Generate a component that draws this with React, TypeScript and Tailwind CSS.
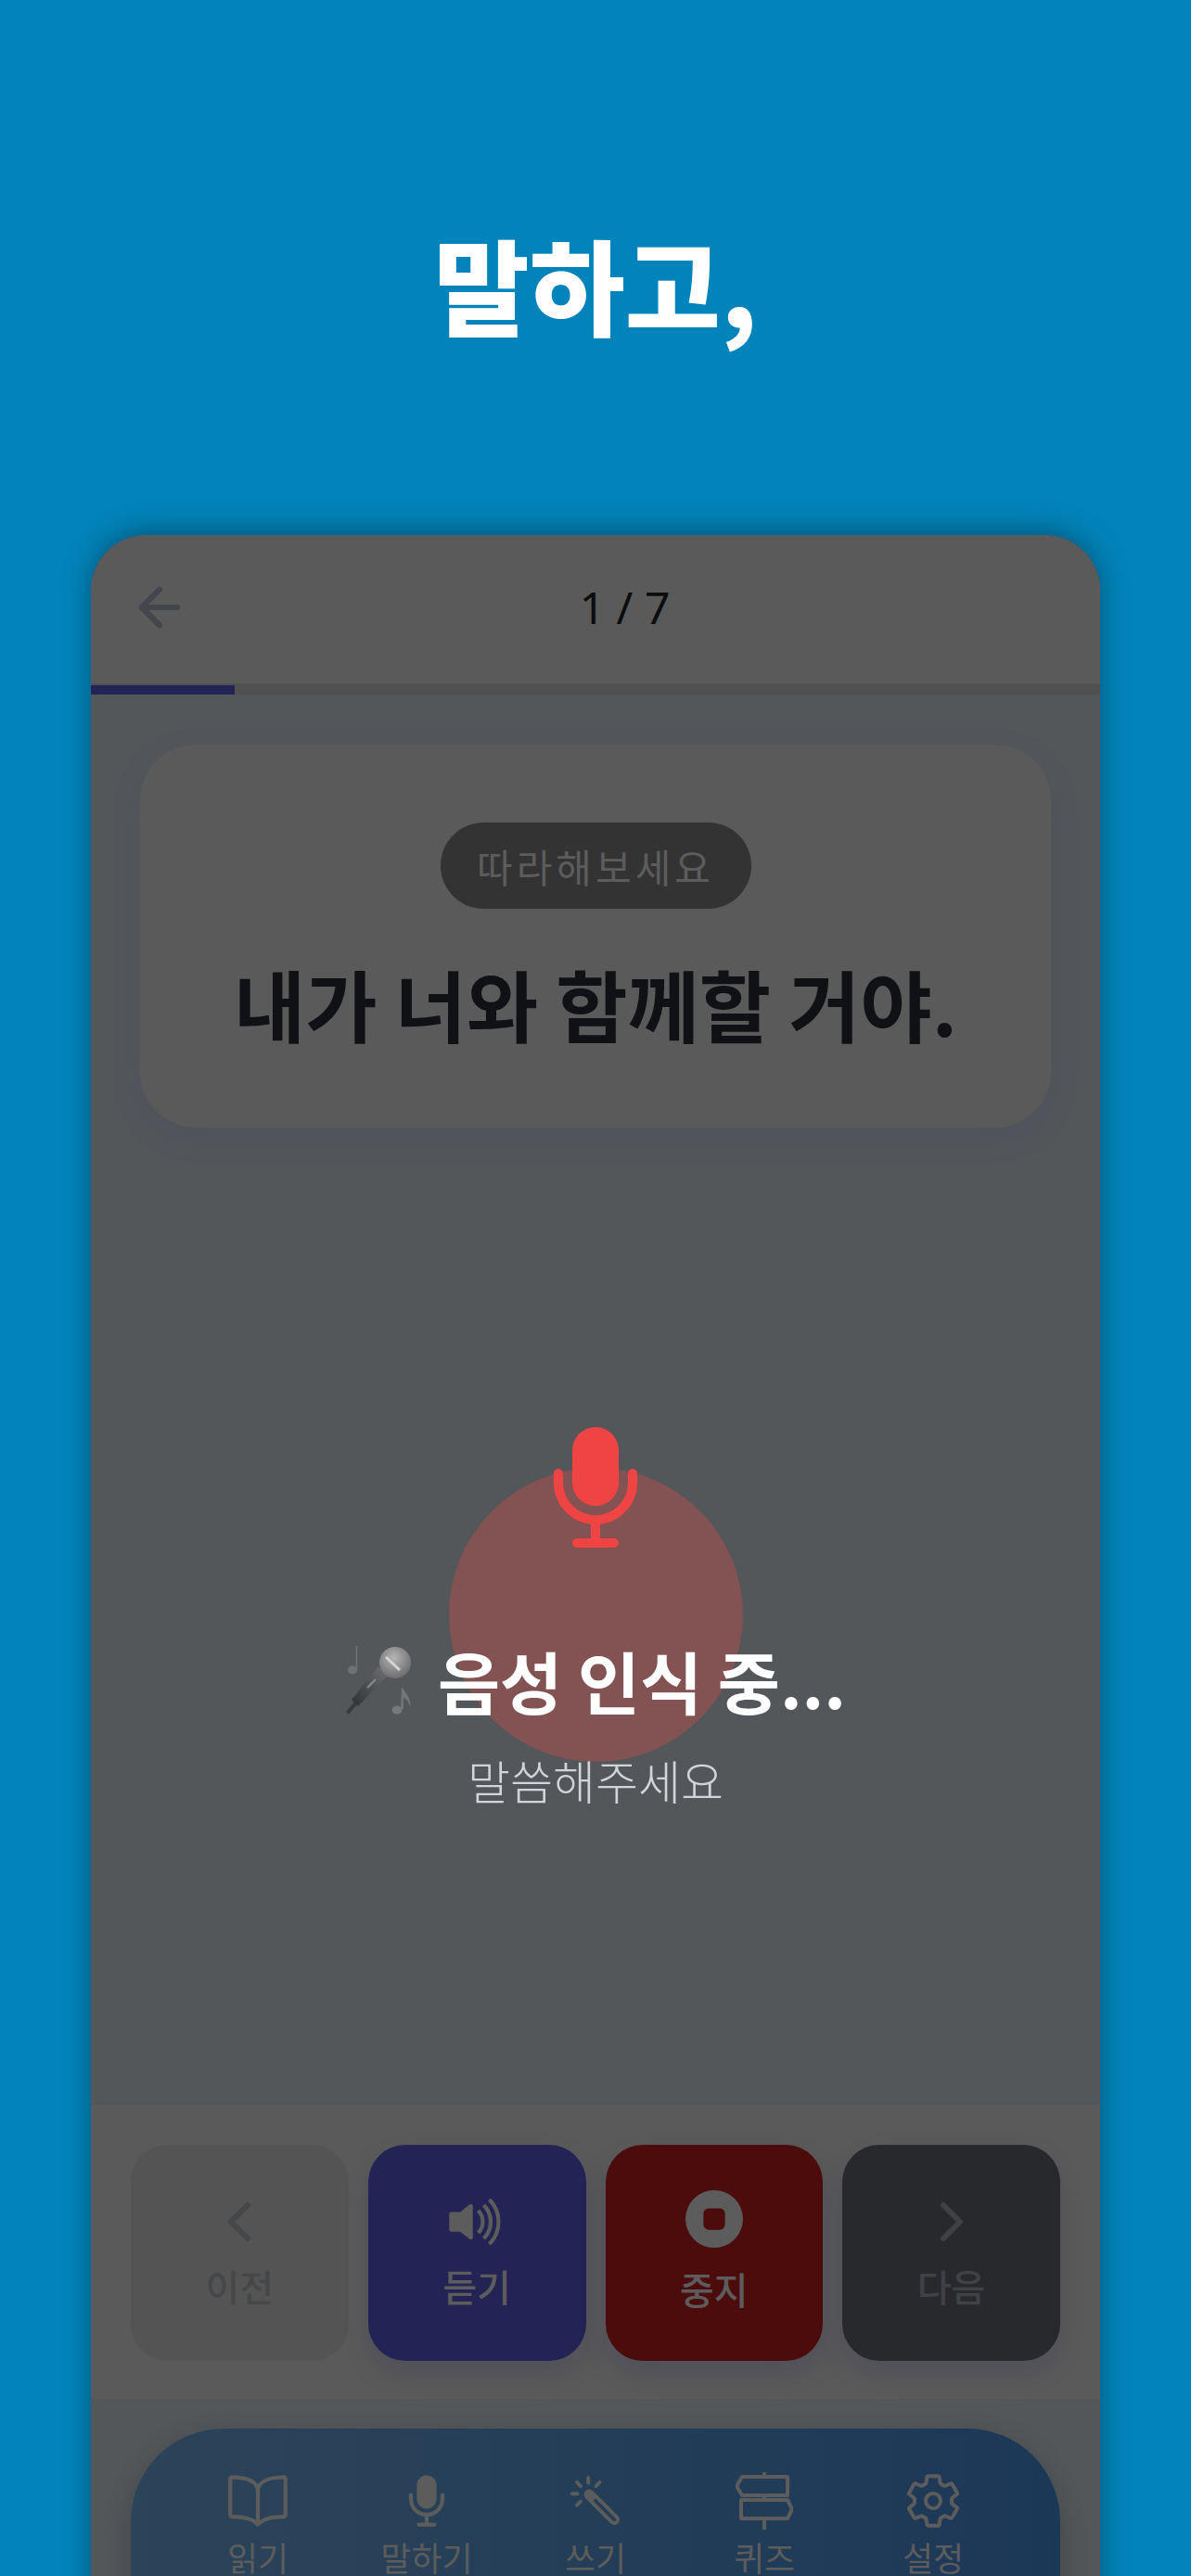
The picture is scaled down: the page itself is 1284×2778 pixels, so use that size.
import { ArrowLeft, ChevronLeft, ChevronRight } from "lucide-react";
import { BsStopCircleFill, BsVolumeUpFill } from "react-icons/bs";
import { IoBookOutline, IoColorWandOutline, IoMic, IoSettingsOutline } from "react-icons/io5";

const F = "font-['Noto_Sans_CJK_KR','Noto_Sans',sans-serif]";

function MicEmoji() {
  return (
    <svg width="72" height="74" viewBox="0 0 72 74" className="shrink-0">
      <defs>
        <linearGradient id="h" x1="0" y1="1" x2="1" y2="0">
          <stop offset="0" stopColor="#2f3032" />
          <stop offset="1" stopColor="#6f7072" />
        </linearGradient>
        <radialGradient id="m" cx="0.45" cy="0.35" r="0.8">
          <stop offset="0" stopColor="#b5b5b5" />
          <stop offset="1" stopColor="#5d5d5d" />
        </radialGradient>
      </defs>
      <path d="M1 71 L4 74 L13 63 L10 60 Z" fill="#3a3b3d" />
      <path d="M7 58 L14 65 L46 32 L36 22 Z" fill="url(#h)" />
      <circle cx="54" cy="18" r="17" fill="url(#m)" />
      <path d="M44 12 L59 26" stroke="#d5d5d5" strokeWidth="3" />
      <path d="M24 45 L33 36" stroke="#8a8b8d" strokeWidth="2" />
      <ellipse cx="8" cy="26" rx="5" ry="4.5" fill="#707173" />
      <path d="M12.500 26 V0" stroke="#707173" strokeWidth="1.6" />
      <ellipse cx="56" cy="69" rx="5.500" ry="4.500" fill="#77787a" />
      <path d="M60 68 L61 44 C65 50 70 54 71 66 C68 60 66 57 63 56 L63 68 Z" fill="#737476" />
    </svg>
  );
}

function Signpost() {
  return (
    <svg width="62" height="62" viewBox="0 0 62 62" fill="none" stroke="#5c5c5c" strokeWidth="4" strokeLinejoin="round" strokeLinecap="round">
      <path d="M1 15 L7 5 H56 V25 H7 Z" />
      <path d="M6 30 H56 L61 40 L56 50 H6 Z" />
      <path d="M31 1 V5 M31 25 V30 M31 50 V61" />
    </svg>
  );
}

function ActionButton({ bg, icon, label, labelClass, shadow = true }: { bg: string; icon: React.ReactNode; label: string; labelClass: string; shadow?: boolean }) {
  return (
    <div className={`flex h-[233px] flex-1 flex-col items-center justify-center rounded-[40px] pb-[6px] ${bg} ${shadow ? "shadow-[0_14px_24px_rgba(60,60,90,0.3)]" : ""}`}>
      <div className="flex h-[62px] items-center justify-center">{icon}</div>
      <span className={`mt-[14px] text-[40px] font-medium leading-[48px] ${labelClass}`}>{label}</span>
    </div>
  );
}

function NavItem({ icon, label }: { icon: React.ReactNode; label: string }) {
  return (
    <div className="flex w-[182px] flex-col items-center">
      <div className="flex h-[64px] items-center justify-center">{icon}</div>
      <span className="mt-[10px] text-[36px] font-normal leading-[36px] text-[#5c5c5c]">{label}</span>
    </div>
  );
}

export default function App() {
  return (
    <div className={`flex h-[2778px] w-[1284px] flex-col overflow-hidden bg-[#0284ba] ${F}`}>
      <div className="flex h-[577px] shrink-0 items-start justify-center pt-[230px]">
        <h1 className="text-[112px] font-black leading-[150px] text-white">말하고,</h1>
      </div>
      <div className="relative mx-[98px] flex h-[2300px] shrink-0 flex-col overflow-hidden rounded-[60px] bg-[#53575a] shadow-[0_-4px_30px_rgba(0,0,0,0.35)]">
        <header className="flex h-[160px] shrink-0 items-center bg-[#5a5a5a] pb-[4px] pl-[41px] pr-[44px]">
          <ArrowLeft size={66} strokeWidth={2.2} className="shrink-0 text-[#43474d]" />
          <span className="flex-1 text-center font-['Noto_Sans',sans-serif] text-[48px] leading-[66px] text-[#0c0d0f]">1 / 7</span>
        </header>
        <div className="h-[12px] shrink-0 bg-[#505050]">
          <div className="mt-[2px] h-[10px] w-[155px] bg-[#232356]" />
        </div>
        <main className="relative h-[1520px] shrink-0 px-[53px] pt-[54px]">
          <section className="flex h-[413px] flex-col items-center rounded-[60px] bg-[#5a5a5a] pt-[84px] shadow-[0_10px_30px_rgba(70,70,100,0.2)]">
            <div className="flex h-[93px] w-[335px] items-center justify-center rounded-full bg-[#333333] text-[42px] tracking-[4px] text-[#5c5c5c]">따라해보세요</div>
            <p className="mt-[44px] text-[84px] font-semibold leading-[116px] text-[#0f1114]">내가 너와 함께할 거야.</p>
          </section>
          <div className="absolute left-[386px] top-[834px] h-[317px] w-[317px] rounded-full bg-[#835252]" />
          <IoMic className="absolute left-[464px] top-[775px] text-[160px] text-[#ef4444]" />
          <div className="absolute left-0 right-0 top-[1018px] flex flex-col items-center">
            <div className="flex h-[90px] items-center gap-[28px] text-[73px] font-semibold text-white">
              <MicEmoji />
              <span>음성 인식 중...</span>
            </div>
            <p className="mt-[28px] text-[50px] font-light leading-[68px] text-[#d1d5db]">말씀해주세요</p>
          </div>
        </main>
        <section className="flex h-[318px] shrink-0 gap-[21px] border-t border-[#505457] bg-[#5a5a5a] px-[43px] pt-[43px]">
          <ActionButton bg="bg-[#545454]" shadow={false} icon={<ChevronLeft size={72} strokeWidth={2} className="text-[#454749]" />} label="이전" labelClass="text-[#454749]" />
          <ActionButton bg="bg-[#232356]" icon={<BsVolumeUpFill className="text-[68px] text-[#5c5c5c]" />} label="듣기" labelClass="text-[#5c5c5c]" />
          <ActionButton bg="bg-[#4d0c0c]" icon={<BsStopCircleFill className="text-[62px] text-[#5c5c5c]" />} label="중지" labelClass="text-[#5c5c5c] mt-[20px]" />
          <ActionButton bg="bg-[#28292d]" icon={<ChevronRight size={72} strokeWidth={2} className="text-[#3f4144]" />} label="다음" labelClass="text-[#3f4144]" />
        </section>
        <nav className="mx-[43px] mt-[32px] flex h-[260px] shrink-0 justify-center rounded-[100px] bg-gradient-to-r from-[#2c4459] to-[#1c3857] pt-[46px] shadow-[0_10px_30px_rgba(0,0,0,0.2)]">
          <NavItem icon={<IoBookOutline className="text-[68px] text-[#5c5c5c]" />} label="읽기" />
          <NavItem icon={<IoMic className="text-[68px] text-[#5c5c5c]" />} label="말하기" />
          <NavItem icon={<IoColorWandOutline className="text-[62px] text-[#5c5c5c]" />} label="쓰기" />
          <NavItem icon={<Signpost />} label="퀴즈" />
          <NavItem icon={<IoSettingsOutline className="text-[64px] text-[#5c5c5c]" />} label="설정" />
        </nav>
      </div>
    </div>
  );
}
